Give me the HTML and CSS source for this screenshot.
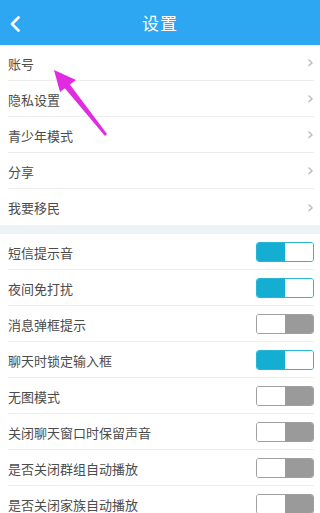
FILE: index.html
```html
<!DOCTYPE html>
<html lang="zh">
<head>
<meta charset="utf-8">
<link rel="stylesheet" href="styles.css">
</head>
<body>
<div class="page">
  <header class="bar">
    <svg class="back" width="12" height="16" viewBox="0 0 12 16"><path d="M9.5 1.5 L3 8 L9.5 14.5" fill="none" stroke="#fff" stroke-width="2.6" stroke-linecap="round" stroke-linejoin="round"/></svg>
    <div class="title">设置</div>
  </header>
  <section class="group">
    <div class="row"><div class="inner"><span>账号</span><span class="chev">&#x203A;</span></div></div>
    <div class="row"><div class="inner"><span>隐私设置</span><span class="chev">&#x203A;</span></div></div>
    <div class="row"><div class="inner"><span>青少年模式</span><span class="chev">&#x203A;</span></div></div>
    <div class="row"><div class="inner"><span>分享</span><span class="chev">&#x203A;</span></div></div>
    <div class="row last"><div class="inner"><span>我要移民</span><span class="chev">&#x203A;</span></div></div>
  </section>
  <div class="band"></div>
  <section class="group">
    <div class="row"><div class="inner"><span>短信提示音</span><span class="sw on"><i></i><i></i></span></div></div>
    <div class="row"><div class="inner"><span>夜间免打扰</span><span class="sw on"><i></i><i></i></span></div></div>
    <div class="row"><div class="inner"><span>消息弹框提示</span><span class="sw off"><i></i><i></i></span></div></div>
    <div class="row"><div class="inner"><span>聊天时锁定输入框</span><span class="sw on"><i></i><i></i></span></div></div>
    <div class="row"><div class="inner"><span>无图模式</span><span class="sw off"><i></i><i></i></span></div></div>
    <div class="row"><div class="inner"><span>关闭聊天窗口时保留声音</span><span class="sw off"><i></i><i></i></span></div></div>
    <div class="row"><div class="inner"><span>是否关闭群组自动播放</span><span class="sw off"><i></i><i></i></span></div></div>
    <div class="row"><div class="inner"><span>是否关闭家族自动播放</span><span class="sw off"><i></i><i></i></span></div></div>
  </section>
  <svg class="arrow" width="320" height="160" viewBox="0 0 320 160">
    <polygon points="105,136 107,134 68,82 63,86" fill="#e02be0"/>
    <polygon points="54,70 76,80 60,92" fill="#e02be0"/>
  </svg>
</div>
</body>
</html>
```
FILE: styles.css
```css
* { box-sizing: border-box; margin: 0; padding: 0; }
html, body { width: 320px; height: 513px; overflow: hidden; background: #fff; }
body { font-family: "Noto Sans CJK SC", "Noto Sans", sans-serif; color: #4c4c4c; font-size: 13px; }
.page { position: relative; width: 320px; }
.bar { height: 45px; background: #2ea7f3; display: flex; align-items: center; justify-content: center; position: relative; }
.back { position: absolute; left: 9px; top: 16px; }
.title { color: #fff; font-size: 17px; letter-spacing: 1px; }
.group { background: #fff; }
.row { height: 36px; padding: 0 6px 0 8px; }
.inner { height: 36px; display: flex; align-items: center; justify-content: space-between; border-bottom: 1px solid #ededed; padding-top: 1px; }
.row.last .inner { border-bottom: none; }
.chev { color: #bbb; font-size: 18px; font-family: "DejaVu Sans", sans-serif; line-height: 1; margin-top: -2px; }
.band { height: 9px; background: #eef3f8; border-top: 1px solid #f1f4f7; }
.sw { width: 58px; height: 20px; border-radius: 3px; display: flex; overflow: hidden; border: 1px solid; }
.sw i { flex: 1; display: block; }
.sw.on { border-color: #2ab5d3; }
.sw.on i:first-child { background: #14aed3; }
.sw.on i:last-child { background: #fff; }
.sw.off { border-color: #a0a0a0; }
.sw.off i:first-child { background: #fff; }
.sw.off i:last-child { background: #9a9a9a; }
.arrow { position: absolute; left: 0; top: 0; pointer-events: none; }
```
